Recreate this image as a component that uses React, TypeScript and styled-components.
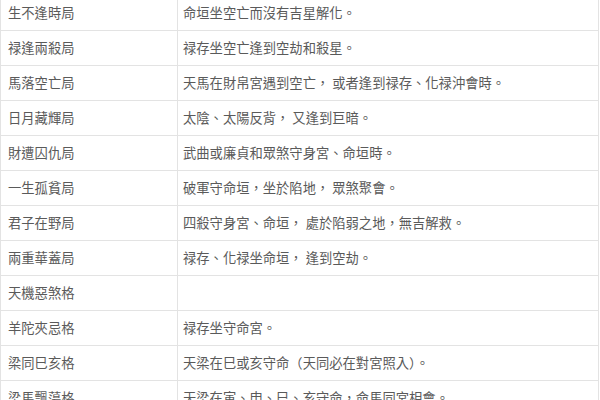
import styled, { createGlobalStyle } from 'styled-components';

const GlobalStyle = createGlobalStyle`
  html, body {
    margin: 0;
    padding: 0;
    background: #ffffff;
    overflow: hidden;
  }
`;

const Page = styled.div`
  width: 600px;
  height: 400px;
  overflow: hidden;
`;

const Table = styled.table`
  width: 599px;
  margin-top: -5px;
  border-collapse: collapse;
  table-layout: fixed;
  font-family: 'Noto Sans CJK TC', 'Noto Sans CJK SC', sans-serif;
  font-size: 13.3px;
  color: #5a5a5a;
`;

const Cell = styled.td<{ $first?: boolean }>`
  width: ${(p) => (p.$first ? '163px' : 'auto')};
  height: 34px;
  padding: 0 6px 0 ${(p) => (p.$first ? '7px' : '5px')};
  border: 1px solid #e3e3e3;
  vertical-align: middle;
  white-space: nowrap;
  line-height: 1;
`;

const rows: [string, string][] = [
  ['生不逢時局', '命垣坐空亡而沒有吉星解化。'],
  ['禄逢兩殺局', '禄存坐空亡逢到空劫和殺星。'],
  ['馬落空亡局', '天馬在財帛宮遇到空亡， 或者逢到禄存、化禄沖會時。'],
  ['日月藏輝局', '太陰、太陽反背， 又逢到巨暗。'],
  ['財遭囚仇局', '武曲或廉貞和眾煞守身宮、命垣時。'],
  ['一生孤貧局', '破軍守命垣，坐於陷地， 眾煞聚會。'],
  ['君子在野局', '四殺守身宮、命垣， 處於陷弱之地，無吉解救。'],
  ['兩重華蓋局', '禄存、化禄坐命垣， 逢到空劫。'],
  ['天機惡煞格', ''],
  ['羊陀夾忌格', '禄存坐守命宮。'],
  ['梁同巳亥格', '天梁在巳或亥守命（天同必在對宮照入）。'],
  ['梁馬飄蕩格', '天梁在寅、申、巳、亥守命，命馬同宮相會。'],
];

const App = () => {
  return (
    <Page>
      <GlobalStyle />
      <Table>
        <tbody>
          {rows.map(([name, desc]) => (
            <tr key={name}>
              <Cell $first>{name}</Cell>
              <Cell>{desc}</Cell>
            </tr>
          ))}
        </tbody>
      </Table>
    </Page>
  );
};

export default App;
